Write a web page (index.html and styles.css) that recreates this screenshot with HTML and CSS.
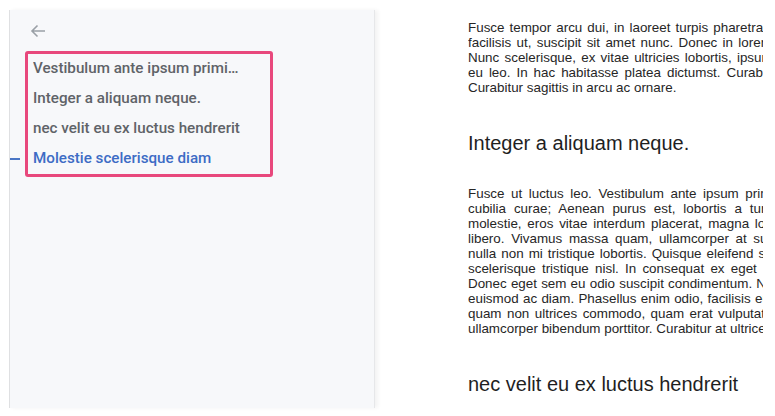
FILE: index.html
```html
<!DOCTYPE html>
<html lang="en">
<head>
    <meta charset="UTF-8">
    <meta name="viewport" content="width=device-width, initial-scale=1.0">
    <title>Article outline</title>
    <link rel="stylesheet" href="styles.css">
</head>
<body>
    <div class="page">
        <aside class="toc">
            <button class="back" aria-label="Back">
                <svg width="16" height="14" viewBox="0 0 16 14">
                    <path d="M15 7H2M7.5 1.5L2 7l5.5 5.5" fill="none" stroke="#9aa0a6" stroke-width="1.6"/>
                </svg>
            </button>
            <ul class="toc-list">
                <li class="toc-item"><a class="toc-link">Vestibulum ante ipsum primis in faucibus</a></li>
                <li class="toc-item"><a class="toc-link">Integer a aliquam neque.</a></li>
                <li class="toc-item"><a class="toc-link">nec velit eu ex luctus hendrerit</a></li>
                <li class="toc-item active"><a class="toc-link">Molestie scelerisque diam</a></li>
            </ul>
        </aside>

        <main class="article">
            <div class="article-body">
                <p>
                    <span class="ln">Fusce tempor arcu dui, in laoreet turpis pharetra eget,</span>
                    <span class="ln">facilisis ut, suscipit sit amet nunc. Donec in lorem vel,</span>
                    <span class="ln">Nunc scelerisque, ex vitae ultricies lobortis, ipsum nisl</span>
                    <span class="ln">eu leo. In hac habitasse platea dictumst. Curabitur in</span>
                    Curabitur sagittis in arcu ac ornare.
                </p>

                <h2>Integer a aliquam neque.</h2>

                <p>
                    <span class="ln">Fusce ut luctus leo. Vestibulum ante ipsum primis in</span>
                    <span class="ln">cubilia curae; Aenean purus est, lobortis a turpis a</span>
                    <span class="ln">molestie, eros vitae interdum placerat, magna lobortis</span>
                    <span class="ln">libero. Vivamus massa quam, ullamcorper at suscipit</span>
                    <span class="ln">nulla non mi tristique lobortis. Quisque eleifend sapien</span>
                    <span class="ln">scelerisque tristique nisl. In consequat ex eget lacus.</span>
                    <span class="ln">Donec eget sem eu odio suscipit condimentum. Nullam</span>
                    <span class="ln">euismod ac diam. Phasellus enim odio, facilisis eu nisi.</span>
                    <span class="ln">quam non ultrices commodo, quam erat vulputate nisl</span>
                    ullamcorper bibendum porttitor. Curabitur at ultrices.
                </p>

                <h2>nec velit eu ex luctus hendrerit</h2>
            </div>
        </main>
    </div>
</body>
</html>
```

FILE: styles.css
```css
body {
    margin: 0;
    background: #ffffff;
    font-family: "Liberation Sans", Arial, sans-serif;
    overflow: hidden;
}
.page {
    display: flex;
    height: 416px;
    padding: 10px 0 8px 9px;
    box-sizing: border-box;
}

/* outline panel */
.toc {
    flex: none;
    width: 366px;
    box-sizing: border-box;
    padding-left: 15px;
    background: #f7f8fa;
    border-left: 1px solid #dfe0e2;
    border-right: 1px solid #e6e7e9;
    box-shadow: 3px 0 4px rgba(0, 0, 0, 0.05);
}
.back {
    display: block;
    width: 16px;
    height: 14px;
    margin: 14px 0 0 5px;
    padding: 0;
    border: none;
    background: none;
    cursor: pointer;
}
.back svg {
    display: block;
}
.toc-list {
    list-style: none;
    width: 248px;
    margin: 13px 0 0;
    padding: 0 0 0 5px;
    box-sizing: border-box;
    border: 3px solid #e8487c;
    border-radius: 3px;
}
.toc-item {
    position: relative;
    height: 30px;
}
.toc-link {
    display: block;
    width: 213px;
    line-height: 29px;
    font-family: Roboto, "Noto Sans", sans-serif;
    font-size: 15.2px;
    font-weight: 500;
    color: #5f6368;
    white-space: nowrap;
    overflow: hidden;
    text-overflow: ellipsis;
    cursor: pointer;
}
.toc-item.active .toc-link {
    color: #3d6cc5;
}
.toc-item.active::before {
    content: "";
    position: absolute;
    left: -23px;
    top: 14px;
    width: 10px;
    height: 2px;
    background: #4a76c5;
}

/* article */
.article {
    flex: none;
    width: 295px;
    margin-left: 93px;
    overflow: hidden;
}
.article-body {
    width: 330px;
    padding-top: 10px;
    color: #262626;
}
.article-body p {
    margin: 0;
    font-size: 13.4px;
    line-height: 15px;
    text-align: justify;
}
.ln {
    display: block;
    white-space: nowrap;
    text-align-last: justify;
}
.article-body h2 {
    margin: 36px 0 31px;
    font-size: 20px;
    font-weight: normal;
    line-height: 24px;
    color: #1f1f1f;
}
```
